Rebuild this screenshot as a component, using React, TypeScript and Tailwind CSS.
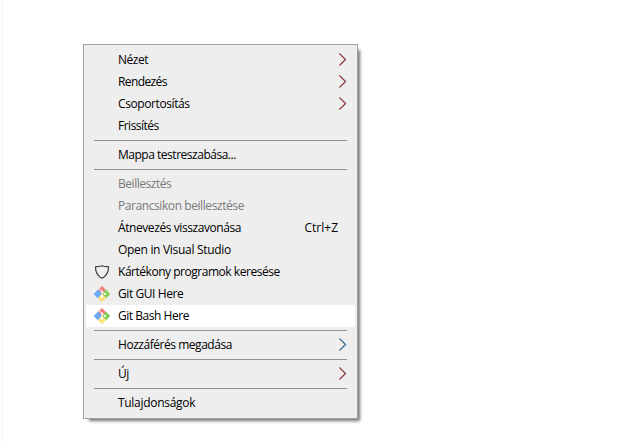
import type { ReactNode } from 'react';

type Item = {
  label: string;
  tracking?: string;
  icon?: ReactNode;
  shortcut?: string;
  arrow?: string;
  disabled?: boolean;
  active?: boolean;
};

function Shield() {
  return (
    <svg className="block size-4" viewBox="0 0 16 16" fill="none" stroke="#404040" strokeWidth="1.2" strokeLinejoin="round">
      <path d="M8 1.7C6.2 2.5 4 2.7 1.6 2.7C1.2 7.6 3.6 11.2 6.6 13.6Q8 14.5 9.4 13.6C12.4 11.2 14.8 7.6 14.4 2.7C12 2.7 9.8 2.5 8 1.7Z" />
    </svg>
  );
}

function GitLogo() {
  return (
    <svg className="block size-4" viewBox="0 0 16 16">
      <path d="M8 0L12.2 4.2L8 8.4L3.8 4.2Z" fill="#f47b7b" />
      <path d="M4 3.6L8.2 8L4 12.4L-0.2 8Z" fill="#6ea8f8" />
      <path d="M12 3.6L16.2 8L12 12.4L7.8 8Z" fill="#86d058" />
      <path d="M8 7.8L12.2 12L8 16.2L3.8 12Z" fill="#ffe37a" />
      <path d="M5.2 2.8L8 5.4V11M8 5.2L11 8" stroke="#fff" strokeWidth="0.9" fill="none" />
      <circle cx="8" cy="5.4" r="1" fill="#fff" />
      <circle cx="8" cy="10.8" r="1.2" fill="#fff" />
      <circle cx="11" cy="8" r="1.1" fill="#fff" />
    </svg>
  );
}

function Chevron({ color }: { color: string }) {
  return (
    <svg className="mb-px ml-auto block h-[13px] w-[9px]" viewBox="0 0 9 13" fill="none" strokeWidth="0.8">
      <path d="M0.6 0.5L6.6 6.5L0.6 12.5" stroke="#e8a868" strokeOpacity="0.6" />
      <path d="M2.2 0.5L8.2 6.5L2.2 12.5" stroke="#6ab0f0" strokeOpacity="0.7" />
      <path d="M1.4 0.5L7.4 6.5L1.4 12.5" stroke={color} strokeWidth="1.05" />
    </svg>
  );
}

const groups: Item[][] = [
  [
    { label: 'Nézet', tracking: 'tracking-[-0.5px]', arrow: '#8e1420' },
    { label: 'Rendezés', tracking: 'tracking-[-0.6px]', arrow: '#8e1420' },
    { label: 'Csoportosítás', tracking: 'tracking-[-0.4px]', arrow: '#8e1420' },
    { label: 'Frissítés', tracking: 'tracking-[-0.5px]' },
  ],
  [{ label: 'Mappa testreszabása...', tracking: 'tracking-[-0.48px]' }],
  [
    { label: 'Beillesztés', tracking: 'tracking-[-0.46px]', disabled: true },
    { label: 'Parancsikon beillesztése', tracking: 'tracking-[-0.42px]', disabled: true },
    { label: 'Átnevezés visszavonása', tracking: 'tracking-[-0.42px]', shortcut: 'Ctrl+Z' },
    { label: 'Open in Visual Studio', tracking: 'tracking-[-0.3px]' },
    { label: 'Kártékony programok keresése', tracking: 'tracking-[-0.47px]', icon: <Shield /> },
    { label: 'Git GUI Here', tracking: 'tracking-[-0.42px]', icon: <GitLogo /> },
    { label: 'Git Bash Here', tracking: 'tracking-[-0.46px]', icon: <GitLogo />, active: true },
  ],
  [{ label: 'Hozzáférés megadása', tracking: 'tracking-[-0.46px]', arrow: '#14588c' }],
  [{ label: 'Új', tracking: 'tracking-[-0.4px]', arrow: '#8e1420' }],
  [{ label: 'Tulajdonságok', tracking: 'tracking-[-0.3px]' }],
];

function Row({ item }: { item: Item }) {
  return (
    <li
      className={`flex h-[22px] items-center pr-2 pl-2 ${item.active ? 'bg-white' : ''} ${
        item.disabled ? 'text-[#7a7a7a]' : 'text-black'
      }`}
    >
      <span className="mr-2 size-4 shrink-0">{item.icon}</span>
      <span className={`whitespace-nowrap ${item.tracking ?? ''}`}>{item.label}</span>
      {item.shortcut && <span className="mr-[9px] ml-auto">{item.shortcut}</span>}
      {item.arrow && <Chevron color={item.arrow} />}
    </li>
  );
}

export default function App() {
  return (
    <main className="h-[443px] w-[631px] bg-white pl-[2px]">
      <div className="h-full border-l border-[#f5f5f5] pt-[44px] pl-[80px]">
        <div className="h-[375px] w-[275px] border border-[#a0a0a0] bg-[#eeeeee] px-[2px] py-1 font-['Open_Sans','Noto_Sans',sans-serif] text-[12px] leading-[22px] shadow-[4px_4px_3px_-2px_rgba(0,0,0,0.55)]">
          {groups.map((group, i) => (
            <div key={i}>
              {i > 0 && <hr className="mx-2 mt-[3px] mb-[3px] h-px border-0 bg-[#919191]" />}
              <ul>
                {group.map((item) => (
                  <Row key={item.label} item={item} />
                ))}
              </ul>
            </div>
          ))}
        </div>
      </div>
    </main>
  );
}
